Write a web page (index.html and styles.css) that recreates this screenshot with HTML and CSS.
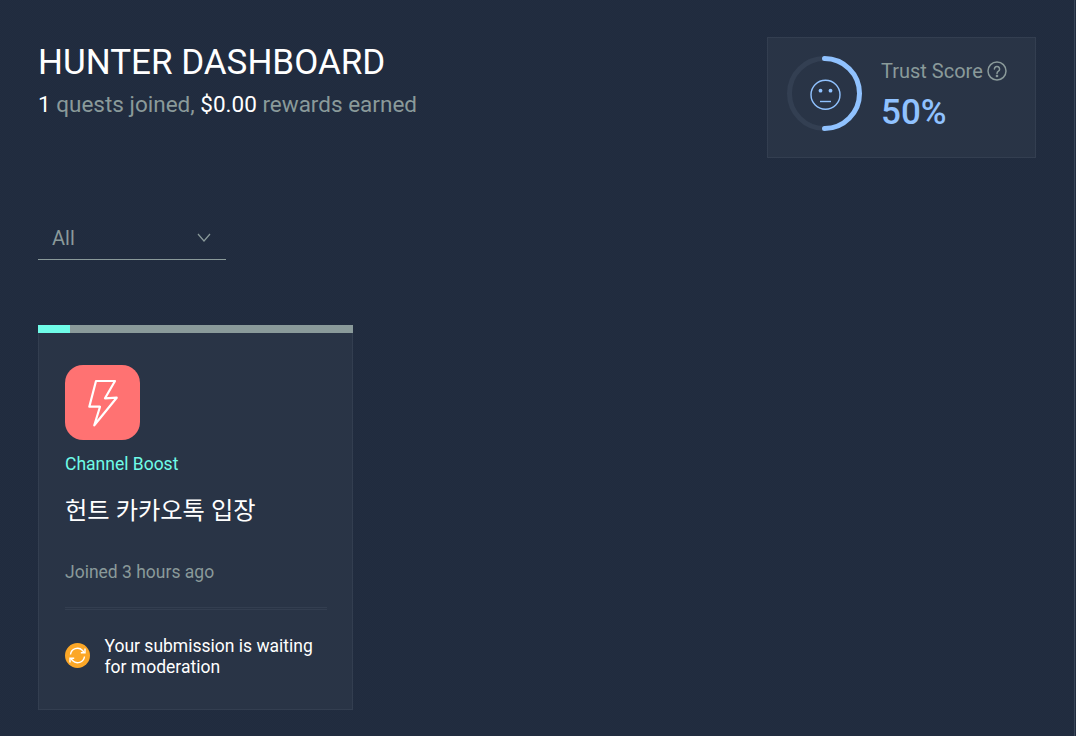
FILE: index.html
```html
<!DOCTYPE html>
<html lang="en">
<head>
<meta charset="utf-8">
<title>Hunter Dashboard</title>
<link rel="stylesheet" href="styles.css">
</head>
<body>
<main class="page">
  <header class="header">
    <div class="intro">
      <h1 class="title">HUNTER DASHBOARD</h1>
      <p class="summary"><span class="hl">1</span> quests joined, <span class="hl">$0.00</span> rewards earned</p>
    </div>
    <aside class="trust">
      <svg class="ring" width="75" height="75" viewBox="0 0 75 75" fill="none">
        <circle cx="37.5" cy="37.5" r="35" stroke="#333f52" stroke-width="5"/>
        <path d="M37.5 2.5a35 35 0 0 1 0 70" stroke="#90c2ff" stroke-width="5" stroke-linecap="round"/>
        <circle cx="38.500" cy="38.700" r="14.500" stroke="#90c2ff" stroke-width="1.400"/>
        <circle cx="33.500" cy="34.700" r="1.900" fill="#90c2ff"/>
        <circle cx="43.500" cy="34.700" r="1.900" fill="#90c2ff"/>
        <path d="M33 45.500h11" stroke="#90c2ff" stroke-width="1.400"/>
      </svg>
      <div class="trust-text">
        <div class="trust-label">Trust Score
          <svg class="help" width="20" height="20" viewBox="0 0 20 20" fill="none" stroke="#8a9a9a" stroke-width="1.500">
            <circle cx="10" cy="10" r="9"/>
            <path d="M7.400 8a2.600 2.600 0 1 1 4 2.200c-.9.6-1.400 1-1.400 2.200" stroke-linecap="round"/>
            <circle cx="10" cy="15" r=".6" fill="#8a9a9a"/>
          </svg>
        </div>
        <div class="trust-value">50%</div>
      </div>
    </aside>
  </header>

  <div class="filter">
    <span>All</span>
    <svg width="14" height="9" viewBox="0 0 14 9" fill="none" stroke="#8a9a9a" stroke-width="1.200"><path d="M1 1l6 7 6-7"/></svg>
  </div>

  <article class="card">
    <div class="progress"><div class="progress-fill"></div></div>
    <div class="card-body">
      <div class="quest-icon">
        <svg width="75" height="75" viewBox="0 0 75 75" fill="none">
          <path d="M31 16h19l-10 17.300 11.700-.6-22.400 27.600 5.700-18.600h-10.700z" stroke="#fff" stroke-width="2.200" stroke-linejoin="round"/>
        </svg>
      </div>
      <div class="category">Channel Boost</div>
      <h2 class="quest-title">헌트 카카오톡 입장</h2>
      <div class="joined">Joined 3 hours ago</div>
      <div class="divider"></div>
      <div class="status">
        <svg class="status-icon" width="25" height="25" viewBox="0 0 25 25" fill="none">
          <circle cx="12.500" cy="12.500" r="12.500" fill="#fca727"/>
          <path d="M5.500 11.500a7 7 0 0 1 12-4l1.500 1.700M19.500 13.500a7 7 0 0 1-12 4L6 15.800" stroke="#fff" stroke-width="1.400"/>
          <path d="M20 5.500v4.200h-4.200M5 19.500v-4.200h4.200" stroke="#fff" stroke-width="1.400"/>
        </svg>
        <p class="status-text">Your submission is waiting for moderation</p>
      </div>
    </div>
  </article>
</main>
</body>
</html>
```

FILE: styles.css
```css
* { box-sizing: border-box; }
html, body { margin: 0; height: 100%; }
body {
  background:
    linear-gradient(#3a4658, #3a4658) right 1px top 0 / 1px 100% no-repeat,
    repeating-conic-gradient(#202b3e 0 25%, #222d40 0 50%) 0 0 / 2px 2px;
  font-family: Roboto, "Noto Sans CJK KR", sans-serif;
  overflow: hidden;
}
.page { padding: 37px 40px 0 38px; }
.header { display: flex; justify-content: space-between; align-items: flex-start; }
.intro { padding-top: 6px; }
.title { margin: 0; font-size: 35px; line-height: 40px; font-weight: 400; color: #fff; }
.summary { margin: 8px 0 0; font-size: 22.500px; line-height: 26px; color: #8a9a9a; }
.hl { color: #fff; }
.trust {
  width: 269px; height: 121px;
  display: flex; align-items: flex-start; gap: 19px;
  padding: 18px 0 0 19px;
  background: #293446;
  border: 1px solid #333e50;
}
.ring { flex: none; }
.trust-text { padding-top: 3px; }
.trust-label { display: flex; align-items: center; gap: 4px; font-size: 20px; line-height: 24px; color: #8a9a9a; }
.help { flex: none; }
.trust-value { margin-top: 8px; font-size: 35px; line-height: 44px; font-weight: 500; color: #90c2ff; }
.filter {
  width: 188px; height: 44px; margin-top: 58px;
  display: flex; align-items: center; justify-content: space-between;
  padding: 0 15px 0 14px;
  font-size: 20px; color: #8a9a9a;
  border-bottom: 1px solid #8a9a9a;
}
.card {
  width: 315px; height: 385px; margin-top: 65px;
  background: #293446;
  border: 1px solid #333e50;
  border-top: 0;
}
.progress { height: 8px; margin: 0 -1px; background: #8a9a9a; }
.progress-fill { width: 32px; height: 100%; background: #6ffce8; }
.card-body { padding: 32px 25px 0 26px; }
.quest-icon { width: 75px; height: 75px; border-radius: 18px; background: #ff7272; }
.quest-icon svg { display: block; }
.category { margin-top: 13px; font-size: 17.500px; line-height: 22px; color: #6ffce8; }
.quest-title { margin: 20px 0 0; font-size: 24.250px; line-height: 32px; font-weight: 400; color: #fff; }
.joined { margin-top: 34px; font-size: 17.500px; line-height: 22px; color: #8a9a9a; }
.divider { height: 3px; margin-top: 24px; border-top: 1px solid #333e50; border-bottom: 1px solid #333e50; }
.status { display: flex; align-items: center; gap: 14.500px; margin-top: 26px; }
.status-icon { flex: none; margin-top: -3px; }
.status-text { margin: 0; width: 222px; font-size: 17.500px; line-height: 21px; color: #fff; }
```
